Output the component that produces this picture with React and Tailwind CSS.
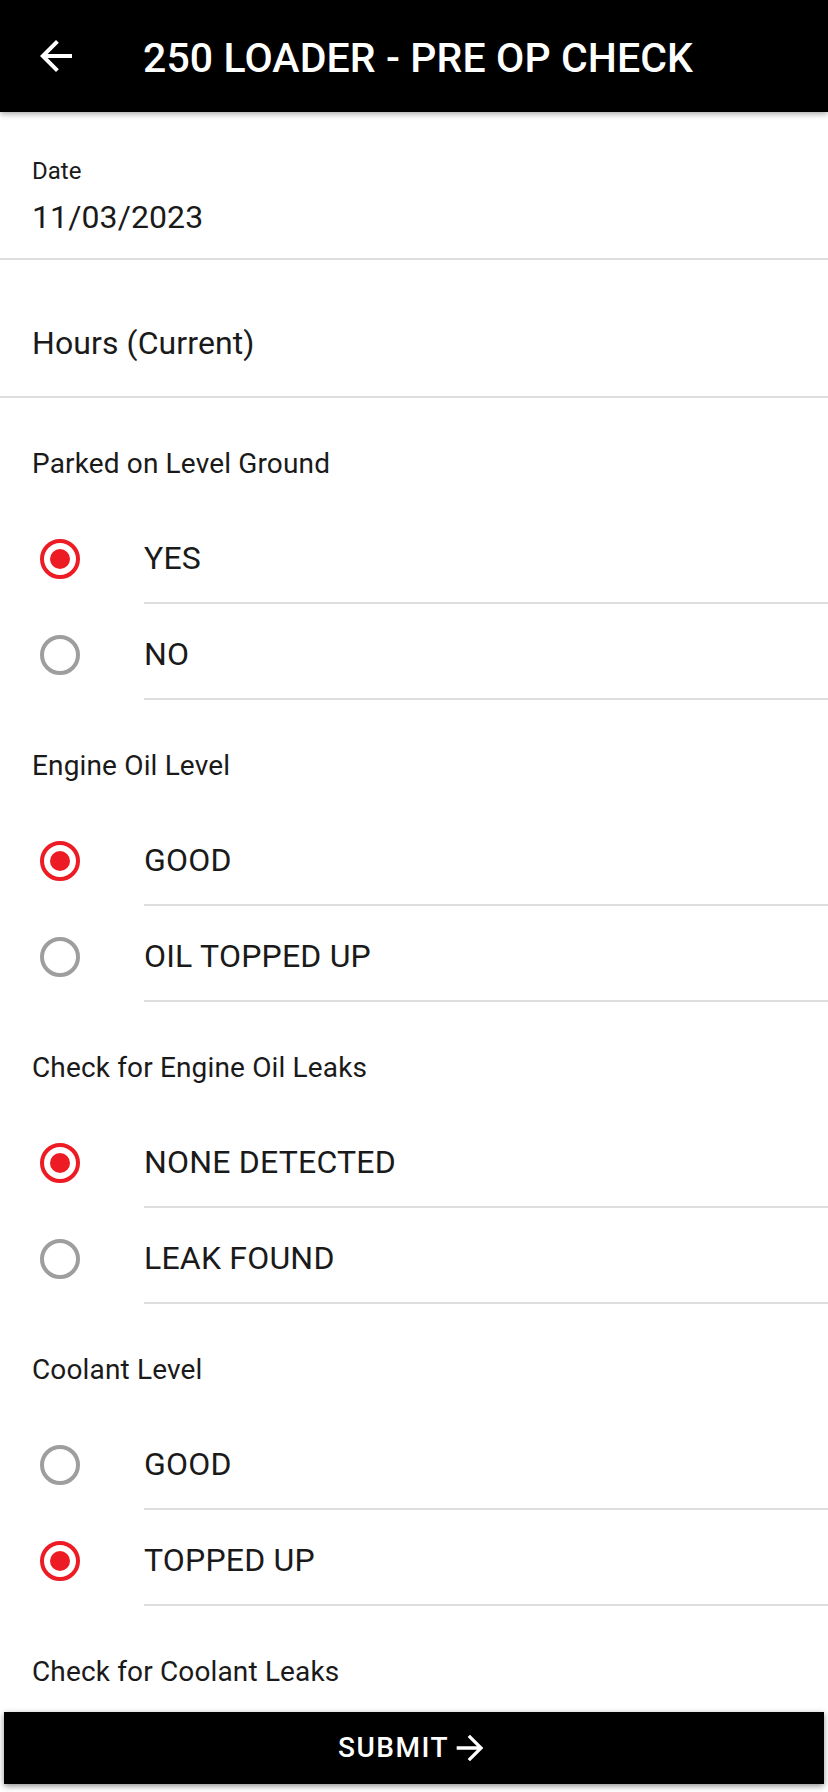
import React from "react";

const sections = [
  { label: "Parked on Level Ground", options: ["YES", "NO"], selected: 0 },
  { label: "Engine Oil Level", options: ["GOOD", "OIL TOPPED UP"], selected: 0 },
  { label: "Check for Engine Oil Leaks", options: ["NONE DETECTED", "LEAK FOUND"], selected: 0 },
  { label: "Coolant Level", options: ["GOOD", "TOPPED UP"], selected: 1 },
  { label: "Check for Coolant Leaks", options: [], selected: -1 },
];

function Radio({ checked }) {
  if (checked) {
    return (
      <div className="w-10 h-10 rounded-full border-4 border-[#ed1c24] flex items-center justify-center">
        <div className="w-5 h-5 rounded-full bg-[#ed1c24]" />
      </div>
    );
  }
  return <div className="w-10 h-10 rounded-full border-4 border-[#9e9e9e]" />;
}

function OptionRow({ text, checked }) {
  return (
    <div className="flex h-[96px]">
      <div className="w-[144px] shrink-0 flex items-center pl-10 pt-[5px]">
        <Radio checked={checked} />
      </div>
      <div className="flex-1 flex items-center border-b-2 border-[#dedede] pt-[5px]">
        <span className="text-[32px] leading-[38px] tracking-[0.2px] text-[#1a1a1a]">{text}</span>
      </div>
    </div>
  );
}

export default function App() {
  return (
    <div
      className="relative h-[1792px] w-full overflow-hidden bg-white"
      style={{ fontFamily: "Roboto, 'Noto Sans', Arial, sans-serif" }}
    >
      <header className="relative z-10 h-[112px] bg-black flex items-center pl-8 shadow-[0_2px_6px_rgba(0,0,0,0.35)]">
        <svg width="48" height="48" viewBox="0 0 24 24" fill="white">
          <path d="M20 11H7.83l5.59-5.59L12 4l-8 8 8 8 1.41-1.41L7.83 13H20v-2z" />
        </svg>
        <h1 className="ml-[63px] mt-1 text-white text-[41px] leading-[48px] font-medium tracking-[0.1px]">
          250 LOADER - PRE OP CHECK
        </h1>
      </header>

      <div className="border-b-2 border-[#dedede] px-8 pt-[45px] pb-[22px]">
        <div className="text-[24px] leading-[28px] text-[#1a1a1a]">Date</div>
        <div className="mt-[13px] text-[32px] leading-[38px] tracking-[0.1px] text-[#1a1a1a]">11/03/2023</div>
      </div>

      <div className="border-b-2 border-[#dedede] px-8 pt-[64px] pb-[34px]">
        <div className="text-[32px] leading-[38px] tracking-[0.1px] text-[#1a1a1a]">Hours (Current)</div>
      </div>

      {sections.map((s, i) => (
        <div key={i}>
          <div className="px-8 pt-[50px] pb-[28px] text-[28px] leading-[32px] tracking-[0.15px] text-[#1a1a1a]">
            {s.label}
          </div>
          {s.options.map((o, j) => (
            <OptionRow key={j} text={o} checked={j === s.selected} />
          ))}
        </div>
      ))}

      <button className="absolute left-1 right-1 bottom-2 h-[72px] bg-black flex items-center justify-center shadow-[0_2px_6px_rgba(0,0,0,0.45)]">
        <span className="text-white text-[28px] leading-[32px] font-medium tracking-[1.5px]">SUBMIT</span>
        <svg width="40" height="40" viewBox="0 0 24 24" fill="white" className="ml-[1px]">
          <path d="M12 4l-1.41 1.41L16.17 11H4v2h12.17l-5.58 5.59L12 20l8-8z" />
        </svg>
      </button>
    </div>
  );
}
